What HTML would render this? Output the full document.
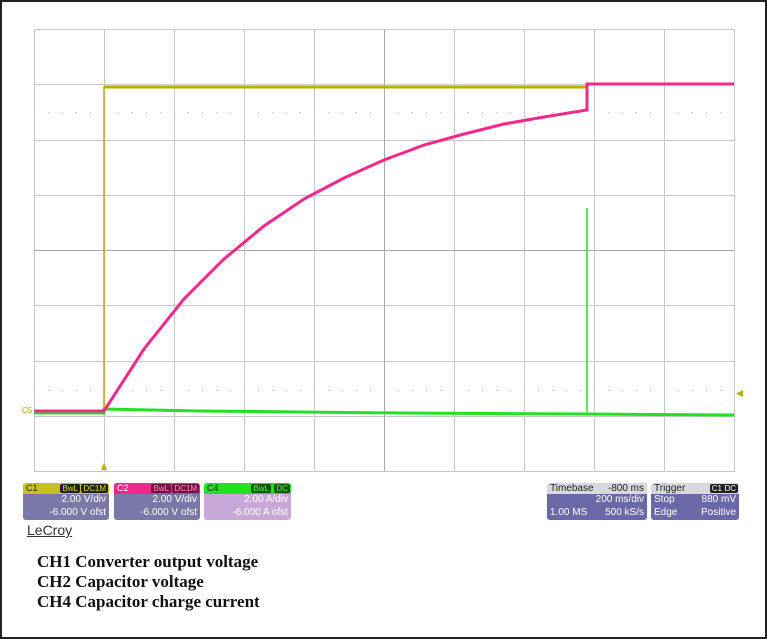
<!DOCTYPE html>
<html><head><meta charset="utf-8"><style>
html,body{margin:0;padding:0;background:#fff}
body{width:767px;height:639px;position:relative;overflow:hidden;font-family:"Liberation Sans",sans-serif}
.frame{position:absolute;left:0;top:0;width:763px;height:635px;border:2px solid #222}
.box{position:absolute;border-radius:3px;font-size:10px;color:#fff;overflow:hidden}
.hd{height:11px;line-height:11px;font-size:9px;padding:0 3px;position:relative}
.r{text-align:right;padding-right:3px;line-height:12px;font-size:10px}
.tag{position:absolute;top:1px;height:9px;line-height:9px;font-size:8px;padding:0 2px;border-radius:2px}
.cap{position:absolute;left:37px;font-family:"Liberation Serif",serif;font-weight:bold;font-size:17px;color:#111}
</style></head><body>
<div class="frame"></div>
<svg width="767" height="639" style="position:absolute;left:0;top:0">
<g stroke="#c8c8c8" stroke-width="1" fill="none">
<rect x="34.5" y="29.5" width="700" height="442"/>
<path d="M104.5 29V471M174.5 29V471M244.5 29V471M314.5 29V471M384.5 29V471M454.5 29V471M524.5 29V471M594.5 29V471M664.5 29V471"/>
<path d="M34 84.5H734M34 140.5H734M34 195.5H734M34 250.5H734M34 305.5H734M34 361.5H734M34 416.5H734M34 471.5H734"/>
</g>
<g stroke="#bbb" stroke-width="1" stroke-dasharray="1 13">
<path d="M34 112.5H734M34 390.5H734"/>
</g>
<path d="M34 250.5H734M384.5 29V471" stroke="#aaa" stroke-width="1"/>
<path d="M104 415V87H588" stroke="#b8b000" stroke-width="1.5" fill="none"/>
<path d="M104 87H588" stroke="#b8b000" stroke-width="3" fill="none"/>
<path d="M34 413H104V409L200 411L400 413L586 414L734 415" stroke="#22e022" stroke-width="3" fill="none"/>
<path d="M587 414V208" stroke="#22e022" stroke-width="1.5" fill="none"/>
<path d="M34 411H104L144 349L184 299L224 259L264 226L304 199L344 178L384 160L424 145L464 134L504 124L544 117L587 110V84H734" stroke="#f0288c" stroke-width="3" fill="none"/>
<polygon points="101,470 107,470 104,463" fill="#b8b000"/>
<polygon points="743,390 743,397 736,393.5" fill="#b8b000"/>
<text x="22" y="413" font-size="8" fill="#b8a000" font-family="Liberation Sans">C5</text>
</svg>
<div class="box" style="left:23px;top:483px;width:86px;height:37px;background:#7a78a8">
<div class="hd" style="background:#c8c020;color:#222">C1<span class="tag" style="right:29px;background:#222;color:#dd0">BwL</span><span class="tag" style="right:1px;background:#222;color:#dd0">DC1M</span></div>
<div class="r">2.00 V/div</div><div class="r" style="line-height:13px">-6.000 V ofst</div></div>
<div class="box" style="left:114px;top:483px;width:86px;height:37px;background:#7a78a8">
<div class="hd" style="background:#f0288c">C2<span class="tag" style="right:29px;background:#7a1040;color:#f8c">BwL</span><span class="tag" style="right:1px;background:#7a1040;color:#f8c">DC1M</span></div>
<div class="r">2.00 V/div</div><div class="r" style="line-height:13px">-6.000 V ofst</div></div>
<div class="box" style="left:204px;top:483px;width:87px;height:37px;background:#c8a8d8">
<div class="hd" style="background:#22e022;color:#222">C4<span class="tag" style="right:20px;background:#0a5a0a;color:#4f4">BwL</span><span class="tag" style="right:1px;background:#0a5a0a;color:#4f4">DC</span></div>
<div class="r">2.00 A/div</div><div class="r" style="line-height:13px">-6.000 A ofst</div></div>
<div class="box" style="left:547px;top:483px;width:100px;height:37px;background:#6a68a8">
<div class="hd" style="background:#d8d8e0;color:#222;font-size:10px">Timebase<span style="position:absolute;right:3px">-800 ms</span></div>
<div class="r">200 ms/div</div><div class="r" style="line-height:13px"><span style="float:left;padding-left:3px">1.00 MS</span>500 kS/s</div></div>
<div class="box" style="left:651px;top:483px;width:88px;height:37px;background:#6a68a8">
<div class="hd" style="background:#d8d8e0;color:#222;font-size:10px">Trigger<span class="tag" style="right:15px;background:#222;color:#fff">C1</span><span class="tag" style="right:1px;background:#222;color:#fff">DC</span></div>
<div class="r"><span style="float:left;padding-left:3px">Stop</span>880 mV</div><div class="r" style="line-height:13px"><span style="float:left;padding-left:3px">Edge</span>Positive</div></div>
<div style="position:absolute;left:27px;top:522px;font-size:14px;color:#333;text-decoration:underline">LeCroy</div>
<div class="cap" style="top:552px">CH1 Converter output voltage</div>
<div class="cap" style="top:572px">CH2 Capacitor voltage</div>
<div class="cap" style="top:592px">CH4 Capacitor charge current</div>
</body></html>
